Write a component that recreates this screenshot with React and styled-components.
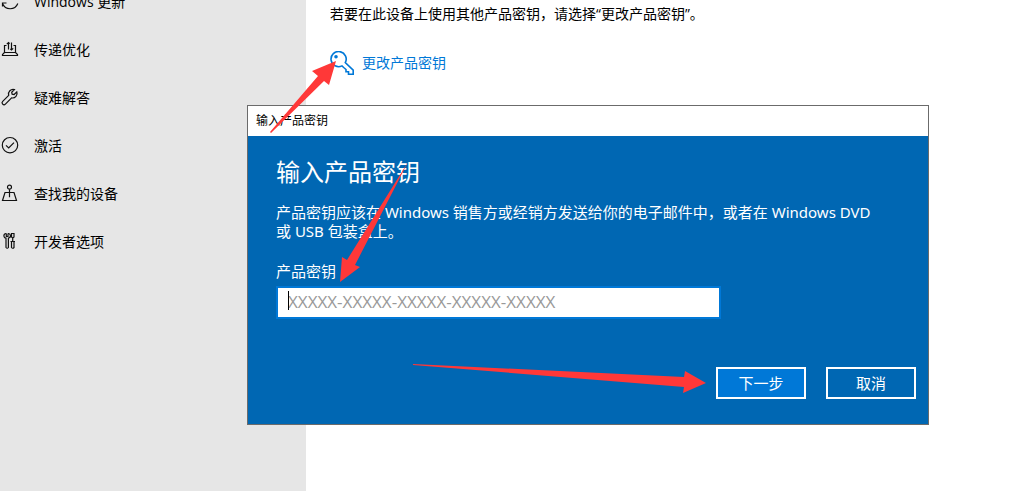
import React from 'react'
import styled, { createGlobalStyle } from 'styled-components'

const GlobalStyle = createGlobalStyle`
  * {
    box-sizing: border-box;
  }
  body {
    margin: 0;
    background: #ffffff;
    color: #000000;
    font-family: "Open Sans", "Noto Sans CJK SC", sans-serif;
    font-size: 14px;
    line-height: 20px;
  }
`

const Page = styled.div`
  position: relative;
  display: flex;
  height: 100vh;
  overflow: hidden;
`

const Sidebar = styled.nav`
  width: 30%;
  background: #e6e6e6;
`

// the list is scrolled, so the first item is partly cut off
const Menu = styled.ul`
  list-style: none;
  margin: -22px 0 0;
  padding: 0;
`

const MenuLink = styled.a`
  display: flex;
  align-items: center;
  gap: 14px;
  height: 48px;
  color: inherit;
  text-decoration: none;
`

const MenuIcon = styled.svg`
  width: 20px;
  height: 20px;
  fill: none;
  stroke: #111111;
  stroke-width: 1.2;
`

const Main = styled.main`
  flex: 1;
  padding: 4px 24px;
`

const Hint = styled.p`
  margin: 0 0 27px;
`

const KeyLink = styled.a`
  display: inline-flex;
  align-items: center;
  gap: 8px;
  color: #0078d7;
  text-decoration: none;
`

const KeyIcon = styled.svg`
  width: 24px;
  height: 24px;
  fill: none;
  stroke: #0078d7;
  stroke-width: 1.6;
`

const Dialog = styled.section`
  position: absolute;
  top: 105px;
  left: 247px;
  width: 682px;
  border: 1px solid #6b6b6b;
  background: #0067b3;
  color: #ffffff;
`

const TitleBar = styled.header`
  padding: 5px 8px;
  background: #ffffff;
  color: #000000;
  font-size: 12px;
`

const Form = styled.form`
  display: flex;
  flex-direction: column;
  padding: 20px 12px 25px 28px;
  font-family: "Noto Sans", "Noto Sans CJK SC", sans-serif;
  font-size: 15px;
  line-height: 19px;
`

const Title = styled.h1`
  margin: 0 0 15px;
  font-size: 24px;
  font-weight: 400;
  line-height: 32px;
`

const Text = styled.p`
  margin: 0 32px 21px 0;
`

const Label = styled.label`
  margin-bottom: 5px;
`

const Field = styled.div`
  position: relative;
  width: 445px;
`

const KeyInput = styled.input`
  display: block;
  width: 100%;
  height: 33px;
  padding: 0 10px 2px;
  border: 2px solid #0078d7;
  border-radius: 0;
  background: #ffffff;
  color: #000000;
  font-family: "Open Sans", sans-serif;
  font-size: 17px;
  outline: none;
  &::placeholder {
    color: #999999;
    opacity: 1;
  }
`

const Caret = styled.span`
  position: absolute;
  top: 5px;
  left: 12px;
  width: 1px;
  height: 19px;
  background: #000000;
`

const Buttons = styled.div`
  display: flex;
  justify-content: flex-end;
  gap: 20px;
  margin-top: 48px;
`

const Button = styled.button`
  width: 90px;
  height: 32px;
  padding: 0;
  border: 2px solid #ffffff;
  border-radius: 0;
  background: ${({ $primary }) => ($primary ? '#0078d7' : 'transparent')};
  color: #ffffff;
  font: inherit;
`

const Arrows = styled.svg`
  position: absolute;
  top: 0;
  left: 0;
  width: 1020px;
  height: 491px;
  fill: #ff3838;
  pointer-events: none;
`

const menu = [
  {
    text: 'Windows 更新',
    icon: <path d="M2 8a8 8 0 0 1 15.500-1.500M17.800 11.500a8.200 8.200 0 0 1-15.300 0M2.500 14.500v-3.500h4" />,
  },
  {
    text: '传递优化',
    icon: (
      <path d="M6.500 5.500h-2v7l-2 2v1h15v-1l-2-2v-7h-2M4.500 12.500h11M8.500 9.500v-7M6.800 4.200l1.700-1.700 1.200 1.200M11.500 2.500v7.500M10.300 8.800l1.200 1.200 1.700-1.700" />
    ),
  },
  {
    text: '疑难解答',
    icon: (
      <path d="M16.800 3.800l-2.700 2.700-2-.3-.4-2 2.700-2.600a4.600 4.600 0 0 0-5.700 5.700l-6 6a1.900 1.900 0 0 0 2.700 2.800l6.200-6.200a4.600 4.600 0 0 0 5.200-6.100z" />
    ),
  },
  {
    text: '激活',
    icon: (
      <>
        <circle cx="10" cy="9.200" r="7.700" />
        <path d="M6 9.300l2.700 2.700 5.300-5.400" />
      </>
    ),
  },
  {
    text: '查找我的设备',
    icon: (
      <>
        <circle cx="9.500" cy="3.200" r="2" />
        <path d="M9.500 5.200v8M5 8.500h9l2.500 8h-14z" />
      </>
    ),
  },
  {
    text: '开发者选项',
    icon: (
      <path d="M6.300 1.500v3h1.700v-3M6.300 1.500a2.200 2.200 0 0 0-.3 4.500v9.500q1.200 1.500 2.400 0v-9.500a2.200 2.200 0 0 0-.4-4.500M11.500 1.500h2.500v3.500l-1.200 1-1.300-1zM12.700 6v3.500M10.500 9.500h4.500M11.500 9.500v6q1.200 1.500 2.500 0v-6" />
    ),
  },
]

const App = () => {
  return (
    <>
      <GlobalStyle />
      <Page>
        <Sidebar>
          <Menu>
            {menu.map((item) => (
              <li key={item.text}>
                <MenuLink href="#">
                  <MenuIcon viewBox="0 0 20 20" aria-hidden="true">
                    {item.icon}
                  </MenuIcon>
                  {item.text}
                </MenuLink>
              </li>
            ))}
          </Menu>
        </Sidebar>
        <Main>
          <Hint>若要在此设备上使用其他产品密钥，请选择“更改产品密钥”。</Hint>
          <KeyLink href="#">
            <KeyIcon viewBox="0 0 24 24" aria-hidden="true">
              <path d="M15.300 11.700a7.600 7.600 0 1 0-3.300 3.200l1.700 1.600 2.300 2v2.200h2.500v2.500h4.700v-4z" />
              <circle cx="6" cy="5.700" r="1" fill="#0078d7" />
            </KeyIcon>
            更改产品密钥
          </KeyLink>
        </Main>
        <Dialog role="dialog" aria-labelledby="dialog-title">
          <TitleBar>输入产品密钥</TitleBar>
          <Form onSubmit={(e) => e.preventDefault()}>
            <Title id="dialog-title">输入产品密钥</Title>
            <Text>
              产品密钥应该在 Windows 销售方或经销方发送给你的电子邮件中，或者在 Windows DVD 或 USB 包装盒上。
            </Text>
            <Label htmlFor="product-key">产品密钥</Label>
            <Field>
              <KeyInput id="product-key" type="text" placeholder="XXXXX-XXXXX-XXXXX-XXXXX-XXXXX" />
              <Caret />
            </Field>
            <Buttons>
              <Button type="submit" $primary>
                下一步
              </Button>
              <Button type="button">取消</Button>
            </Buttons>
          </Form>
        </Dialog>
        <Arrows viewBox="0 0 1020 491" aria-hidden="true">
          <path d="M270 132L318 76L312 71L336 61L329 85L324 81L271 133z" />
          <path d="M408 162L355 265L360 267L340 282L342 257L347 260z" />
          <path d="M413 364L684 377L685 371L706 383L683 393L684 387L413 365z" />
        </Arrows>
      </Page>
    </>
  )
}

export default App
